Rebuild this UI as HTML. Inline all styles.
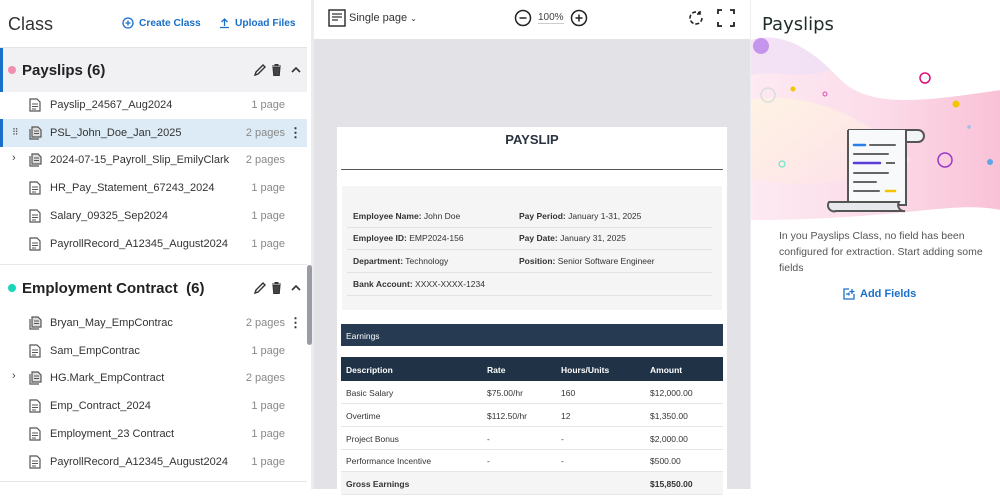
<!DOCTYPE html>
<html><head><meta charset="utf-8"><style>
*{box-sizing:border-box;margin:0;padding:0}
body{width:1000px;height:489px;overflow:hidden;font-family:"Liberation Sans",sans-serif;background:#fff;position:relative;color:#222}
.abs{position:absolute}
#left{left:0;top:0;width:314px;height:489px;background:#fff}
.row{position:absolute;left:0;width:307px;height:28px;font-size:11px;color:#333;display:flex;align-items:center}
.row .ic{position:absolute;left:29px;top:7px}
.row .nm{position:absolute;left:50px}
.row .pg{position:absolute;right:22px;color:#888}
.dots{position:absolute;right:5px;font-weight:bold;color:#333;font-size:13px}
.sechd{position:absolute;left:0;width:307px;height:44px;display:flex;align-items:center}
.sechd .t{position:absolute;left:22px;font-size:15px;font-weight:bold;color:#222}
.dot{position:absolute;left:8px;width:8px;height:8px;border-radius:50%}
#center{left:314px;top:0;width:436px;height:489px;background:#e3e2e7}
#tb{left:0;top:0;width:436px;height:39px;background:#fff}
#doc{left:23px;top:127px;width:390px;height:370px;background:#fff;font-size:8.5px;color:#333}
.lab{font-weight:bold}
.info{position:absolute;left:16px;font-size:8.5px}
.info2{position:absolute;left:182px;font-size:8.5px}
.hl{position:absolute;left:6px;width:370px;height:1px;background:#e2e2e2}
.tr{position:absolute;left:4px;width:382px;height:23px;border-bottom:1px solid #e6e6e6;font-size:8.5px}
.tr span{position:absolute;top:7px}
#right{left:750px;top:0;width:250px;height:489px;background:#fff;border-left:1px solid #eee}
</style></head><body>
<div id="left" class="abs">
  <div class="abs" style="left:8px;top:14px;font-size:18px;color:#333">Class</div>
  <div class="abs" style="left:122px;top:17px;font-size:10.2px;color:#1a6fc9;font-weight:bold;display:flex;align-items:center;gap:5px">
    <svg width="12" height="12" viewBox="0 0 12 12"><circle cx="6" cy="6" r="5" fill="none" stroke="#1a6fc9" stroke-width="1.3"/><path d="M6 3.5v5M3.5 6h5" stroke="#1a6fc9" stroke-width="1.3"/></svg>Create Class</div>
  <div class="abs" style="left:219px;top:17px;font-size:10.2px;color:#1a6fc9;font-weight:bold;display:flex;align-items:center;gap:5px">
    <svg width="11" height="12" viewBox="0 0 11 12"><path d="M5.5 9V2M2.5 5l3-3 3 3M1 10.5h9" fill="none" stroke="#1a6fc9" stroke-width="1.3"/></svg>Upload Files</div>
  <div class="abs" style="left:0;top:47px;width:307px;height:1px;background:#e4e4e4"></div>
  <div class="sechd" style="top:48px;background:#f1f1f3"><div class="abs" style="left:0;top:0;width:3px;height:44px;background:#1a6fc9"></div><div class="dot" style="background:#f28fb0"></div><div class="t">Payslips (6)</div>
    <svg class="abs" style="left:254px;top:15px" width="50" height="14" viewBox="0 0 50 14"><path d="M1 12l1-3 7-7 2 2-7 7z" fill="none" stroke="#333" stroke-width="1.4"/><path d="M18 3h9M21 3V1.5h3V3M19 4.5h7l-.7 8h-5.6z" fill="#444" stroke="#333" stroke-width="1"/><path d="M38 9l4-4 4 4" fill="none" stroke="#333" stroke-width="1.6"/></svg></div>
  <div class="abs" style="left:0;top:264px;width:307px;height:1px;background:#e8e8e8"></div>
  <div class="sechd" style="top:266px"><div class="dot" style="background:#1ad6b8"></div><div class="t">Employment Contract&nbsp; (6)</div>
    <svg class="abs" style="left:254px;top:15px" width="50" height="14" viewBox="0 0 50 14"><path d="M1 12l1-3 7-7 2 2-7 7z" fill="none" stroke="#333" stroke-width="1.4"/><path d="M18 3h9M21 3V1.5h3V3M19 4.5h7l-.7 8h-5.6z" fill="#444" stroke="#333" stroke-width="1"/><path d="M38 9l4-4 4 4" fill="none" stroke="#333" stroke-width="1.6"/></svg></div>
  <div class="abs" style="left:0;top:481px;width:307px;height:1px;background:#e8e8e8"></div>
  <div class="abs" style="left:311px;top:0;width:3px;height:489px;background:#ececee"></div>
  <div class="abs" style="left:307px;top:265px;width:5px;height:80px;border-radius:3px;background:#9a9ca3"></div>
  <script>
  (function(){
    var doc='<svg class="ic" width="12" height="14" viewBox="0 0 12 14"><path d="M1 1h7l3 3v9H1z" fill="none" stroke="#555" stroke-width="1.2"/><path d="M3 6h6M3 8.5h6M3 11h4" stroke="#555"/></svg>';
    var doc2='<svg class="ic" width="13" height="14" viewBox="0 0 13 14"><path d="M1 3v10h9" fill="none" stroke="#555" stroke-width="1.2"/><path d="M3 1h6l3 3v7H3z" fill="#ddd" stroke="#555" stroke-width="1.2"/><path d="M5 5h5M5 7.5h5" stroke="#555"/></svg>';
    function rows(top,data){var h='';data.forEach(function(d,i){var y=top+i*27.7;
      h+='<div class="row" style="top:'+y+'px;'+(d[3]?'background:#dcebf5':'')+'">'+(d[3]?'<div class="abs" style="left:0;top:0;width:3px;height:28px;background:#1a6fc9"></div><span class="abs" style="left:12px;top:8px;font-size:9px;color:#555;letter-spacing:-1px">⠿</span>':'')+(d[4]?'<span class="abs" style="left:12px;top:6px;font-size:11px;color:#444">›</span>':'')+(d[2]?doc2:doc)+'<span class="nm">'+d[0]+'</span><span class="pg">'+d[1]+'</span>'+(d[5]?'<span class="dots">⋮</span>':'')+'</div>';});return h;}
    var s=rows(91,[["Payslip_24567_Aug2024","1 page"],["PSL_John_Doe_Jan_2025","2 pages",1,1,0,1],["2024-07-15_Payroll_Slip_EmilyClark","2 pages",1,0,1],["HR_Pay_Statement_67243_2024","1 page"],["Salary_09325_Sep2024","1 page"],["PayrollRecord_A12345_August2024","1 page"]]);
    s+=rows(309,[["Bryan_May_EmpContrac","2 pages",1,0,0,1],["Sam_EmpContrac","1 page"],["HG.Mark_EmpContract","2 pages",1,0,1],["Emp_Contract_2024","1 page"],["Employment_23 Contract","1 page"],["PayrollRecord_A12345_August2024","1 page"]]);
    document.write(s);
  })();
  </script>
</div>
<div id="center" class="abs">
  <div id="tb" class="abs">
    <svg class="abs" style="left:14px;top:9px" width="18" height="18" viewBox="0 0 18 18"><rect x="1" y="1" width="16" height="16" fill="none" stroke="#333" stroke-width="1.5"/><path d="M4 5h10M4 8h10M4 11h6" stroke="#333" stroke-width="1.2"/></svg>
    <span class="abs" style="left:35px;top:12px;font-size:11px;color:#333">Single page <span style="font-size:8px">⌄</span></span>
    <svg class="abs" style="left:200px;top:9px" width="18" height="18" viewBox="0 0 18 18"><circle cx="9" cy="9" r="7.5" fill="none" stroke="#222" stroke-width="1.5"/><path d="M5.5 9h7" stroke="#222" stroke-width="1.5"/></svg>
    <span class="abs" style="left:224px;top:12px;font-size:10px;color:#444;border-bottom:1px solid #ccc">100%</span>
    <svg class="abs" style="left:256px;top:9px" width="18" height="18" viewBox="0 0 18 18"><circle cx="9" cy="9" r="7.5" fill="none" stroke="#222" stroke-width="1.5"/><path d="M5.5 9h7M9 5.5v7" stroke="#222" stroke-width="1.5"/></svg>
    <svg class="abs" style="left:373px;top:9px" width="18" height="18" viewBox="0 0 18 18"><path d="M15 9a6 6 0 1 1-2-4.5" fill="none" stroke="#222" stroke-width="1.6" stroke-dasharray="4 2"/><path d="M13 2v3h-3" fill="none" stroke="#222" stroke-width="1.6"/></svg>
    <svg class="abs" style="left:403px;top:9px" width="18" height="18" viewBox="0 0 18 18"><path d="M1 5V1h4M13 1h4v4M17 13v4h-4M5 17H1v-4" fill="none" stroke="#222" stroke-width="1.8"/></svg>
  </div>
  <div id="doc" class="abs">
    <div class="abs" style="left:0;width:390px;top:5px;text-align:center;font-size:13px;font-weight:bold;color:#2a3340">PAYSLIP</div>
    <div class="abs" style="left:4px;top:42px;width:382px;height:1px;background:#555"></div>
    <div class="abs" style="left:5px;top:59px;width:380px;height:124px;background:#f5f5f5"></div>
    <div class="info" style="top:84px"><span class="lab">Employee Name:</span> John Doe</div>
    <div class="info2" style="top:84px"><span class="lab">Pay Period:</span> January 1-31, 2025</div>
    <div class="hl" style="left:10px;top:100px;width:365px"></div>
    <div class="info" style="top:106px"><span class="lab">Employee ID:</span> EMP2024-156</div>
    <div class="info2" style="top:106px"><span class="lab">Pay Date:</span> January 31, 2025</div>
    <div class="hl" style="left:10px;top:122px;width:365px"></div>
    <div class="info" style="top:129px"><span class="lab">Department:</span> Technology</div>
    <div class="info2" style="top:129px"><span class="lab">Position:</span> Senior Software Engineer</div>
    <div class="hl" style="left:10px;top:145px;width:365px"></div>
    <div class="info" style="top:152px"><span class="lab">Bank Account:</span> XXXX-XXXX-1234</div>
    <div class="hl" style="left:10px;top:168px;width:365px"></div>
    <div class="abs" style="left:4px;top:197px;width:382px;height:22px;background:#263b51;color:#fff;padding:7px 5px;font-size:8.5px">Earnings</div>
    <div class="abs" style="left:4px;top:230px;width:382px;height:24px;background:#1f3246;color:#fff;font-weight:bold;font-size:8.5px">
      <span class="abs" style="left:5px;top:8px">Description</span><span class="abs" style="left:146px;top:8px">Rate</span><span class="abs" style="left:220px;top:8px">Hours/Units</span><span class="abs" style="left:309px;top:8px">Amount</span></div>
    <div class="tr" style="top:254px"><span style="left:5px">Basic Salary</span><span style="left:146px">$75.00/hr</span><span style="left:220px">160</span><span style="left:309px">$12,000.00</span></div>
    <div class="tr" style="top:277px"><span style="left:5px">Overtime</span><span style="left:146px">$112.50/hr</span><span style="left:220px">12</span><span style="left:309px">$1,350.00</span></div>
    <div class="tr" style="top:300px"><span style="left:5px">Project Bonus</span><span style="left:146px">-</span><span style="left:220px">-</span><span style="left:309px">$2,000.00</span></div>
    <div class="tr" style="top:322px"><span style="left:5px">Performance Incentive</span><span style="left:146px">-</span><span style="left:220px">-</span><span style="left:309px">$500.00</span></div>
    <div class="tr" style="top:345px;background:#f5f5f5;font-weight:bold"><span style="left:5px">Gross Earnings</span><span style="left:309px">$15,850.00</span></div>
  </div>
</div>
<div id="right" class="abs">
  <svg class="abs" style="left:0;top:30px" width="250" height="200" viewBox="0 0 250 200">
    <defs>
      <linearGradient id="g1" x1="0" y1="0" x2="1" y2="0"><stop offset="0" stop-color="#fde6f0"/><stop offset=".5" stop-color="#fbd6e6"/><stop offset="1" stop-color="#f8b6cf"/></linearGradient>
      <linearGradient id="g2" x1="0" y1="0" x2="1" y2="1"><stop offset="0" stop-color="#fff5e0"/><stop offset="1" stop-color="#fde0ea"/></linearGradient>
    </defs>
    <path d="M0 10C40 0 70 30 90 50 120 80 180 70 250 60V180C200 170 150 190 0 190Z" fill="url(#g1)" opacity=".85"/>
    <path d="M0 70C60 60 120 90 160 130 120 150 60 160 0 150Z" fill="url(#g2)" opacity=".8"/>
    <path d="M0 10C30 0 60 20 80 40 50 50 20 40 0 45Z" fill="#eee0f6" opacity=".7"/>
    <circle cx="10" cy="16" r="8" fill="#c495ea"/>
    <circle cx="17" cy="65" r="7" fill="none" stroke="#ddd" stroke-width="1.5"/>
    <circle cx="42" cy="59" r="2.5" fill="#f5c400"/>
    <circle cx="74" cy="64" r="2" fill="none" stroke="#e04cb0" stroke-width="1"/>
    <circle cx="174" cy="48" r="5" fill="none" stroke="#d8127a" stroke-width="1.5"/>
    <circle cx="205" cy="74" r="3.5" fill="#f5c400"/>
    <circle cx="218" cy="97" r="1.8" fill="#9cc0e6"/>
    <circle cx="194" cy="130" r="7" fill="none" stroke="#9a38c8" stroke-width="1.5"/>
    <circle cx="239" cy="132" r="3" fill="#5fa6e8"/>
    <circle cx="31" cy="134" r="3" fill="none" stroke="#65e8c4" stroke-width="1.2"/>
    <path d="M97 100h70a6 6 0 0 1 0 12h-12" fill="#f3f4f7" stroke="#555" stroke-width="2"/>
    <path d="M97 100v75h58v-75" fill="#f8f9fb" stroke="#555" stroke-width="2"/>
    <path d="M78 172h70a6 6 0 0 0 6 9H85a6 6 0 0 1-7-9z" fill="#e6e8ec" stroke="#555" stroke-width="2"/>
    <path d="M103 115h11" stroke="#2b7de9" stroke-width="2.5" stroke-linecap="round"/><path d="M119 115h25M103 124h34M103 143h34M103 152h22M103 161h25" stroke="#666" stroke-width="2" stroke-linecap="round"/>
    <path d="M103 133h26" stroke="#5a3cd8" stroke-width="2.5" stroke-linecap="round"/><path d="M135 133h9" stroke="#666" stroke-width="2"/>
    <path d="M135 161h9" stroke="#f5c400" stroke-width="2.5" stroke-linecap="round"/>
  </svg>
  <div class="abs" style="left:11px;top:14px;font-size:18px;color:#1f2d2a;font-family:'DejaVu Sans',sans-serif">Payslips</div>
  <div class="abs" style="left:28px;top:228px;width:210px;font-size:10.5px;line-height:16px;color:#555">In you Payslips Class, no field has been configured for extraction. Start adding some fields</div>
  <div class="abs" style="left:92px;top:288px;font-size:11px;font-weight:bold;color:#1a6fc9;display:flex;align-items:center;gap:5px">
    <svg width="12" height="12" viewBox="0 0 12 12"><path d="M6 1H1v10h10V6" fill="none" stroke="#1a6fc9" stroke-width="1.3"/><path d="M9 1v5M6.5 3.5h5M3 6h3M6 4.5v3" stroke="#1a6fc9" stroke-width="1.3"/></svg>Add Fields</div>
</div>
</body></html>
